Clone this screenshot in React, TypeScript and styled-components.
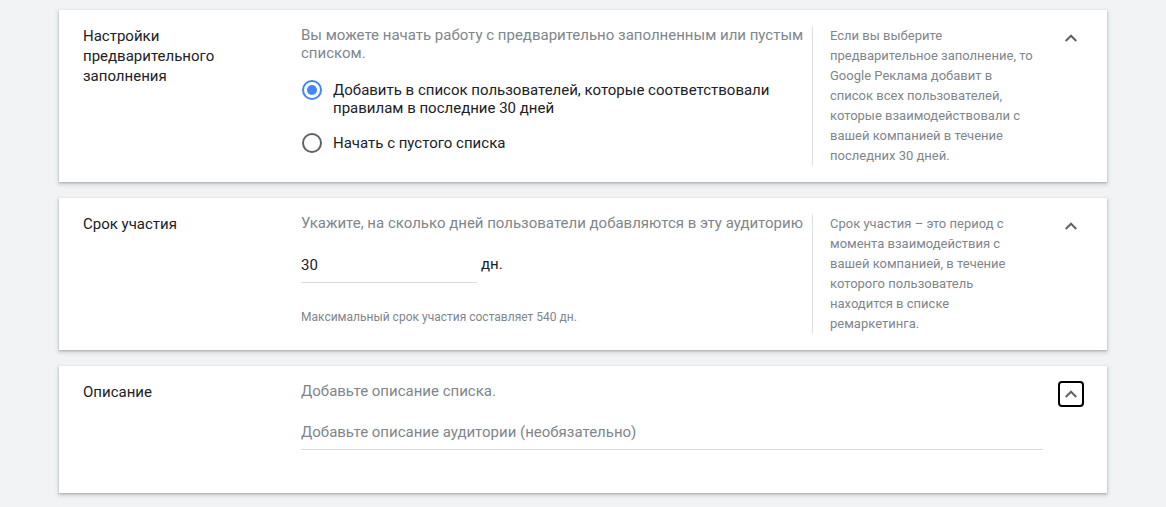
import React from "react";
import styled, { createGlobalStyle } from "styled-components";

const GlobalStyle = createGlobalStyle`
  html, body { margin: 0; padding: 0; background: #f1f3f4; }
  body { font-family: Roboto, "Noto Sans", Arial, sans-serif; -webkit-font-smoothing: antialiased; }
  * { box-sizing: border-box; }
`;

const Page = styled.div`
  display: flex;
  flex-direction: column;
  gap: 16px;
  padding: 10px 59px 14px 59px;
  width: 1166px;
`;

const Card = styled.section<{ $padBottom?: number }>`
  background: #fff;
  box-shadow: 0 1px 2px rgba(60, 64, 67, 0.3), 0 2px 4px 1px rgba(60, 64, 67, 0.15);
  display: grid;
  grid-template-columns: 218px 511px 1px 230px 26px;
  column-gap: 0;
  padding: 16px 23px ${(p) => p.$padBottom ?? 16}px 24px;
  width: 1048px;
  align-items: start;
`;

const Title = styled.div`
  font-size: 15px;
  line-height: 20px;
  color: #202124;
  padding-right: 24px;
`;

const Main = styled.div<{ $wide?: boolean }>`
  grid-column: ${(p) => (p.$wide ? "2 / 5" : "2 / 3")};
  padding-right: ${(p) => (p.$wide ? "0" : "6px")};
  display: flex;
  flex-direction: column;
  align-self: stretch;
`;

const Desc = styled.div`
  font-size: 15px;
  line-height: 18px;
  color: #80868b;
`;

const RadioGroup = styled.div`
  display: flex;
  flex-direction: column;
  gap: 17px;
  margin-top: 19px;
`;

const RadioRow = styled.label`
  display: flex;
  align-items: flex-start;
  gap: 11px;
  cursor: pointer;
`;

const RadioCircle = styled.span<{ $checked?: boolean }>`
  flex: none;
  width: 20px;
  height: 20px;
  margin-top: -1px;
  margin-left: 1px;
  border-radius: 50%;
  border: 2px solid ${(p) => (p.$checked ? "#4285f4" : "#5f6368")};
  display: flex;
  align-items: center;
  justify-content: center;
  &::after {
    content: "";
    width: 10px;
    height: 10px;
    border-radius: 50%;
    background: ${(p) => (p.$checked ? "#4285f4" : "transparent")};
  }
`;

const RadioLabel = styled.span`
  font-size: 15px;
  line-height: 18px;
  color: #202124;
`;

const FieldRow = styled.div<{ $mt: number }>`
  display: flex;
  align-items: center;
  gap: 4px;
  margin-top: ${(p) => p.$mt}px;
`;

const TextInput = styled.input<{ $width?: number }>`
  width: ${(p) => (p.$width ? `${p.$width}px` : "100%")};
  height: 32px;
  border: none;
  border-bottom: 1px solid #dadce0;
  outline: none;
  padding: 0 0 3px 0;
  font-family: Roboto, "Noto Sans", Arial, sans-serif;
  font-size: 15px;
  color: #202124;
  background: transparent;
  &::placeholder { color: #80868b; opacity: 1; }
`;

const Unit = styled.span`
  font-size: 15px;
  color: #202124;
  margin-top: -6px;
`;

const Hint = styled.div`
  font-size: 12px;
  line-height: 16px;
  color: #80868b;
  margin-top: 26px;
`;

const Divider = styled.div`
  width: 1px;
  align-self: stretch;
  background: #e0e0e0;
`;

const Help = styled.div`
  font-size: 13px;
  line-height: 20px;
  color: #80868b;
  padding-left: 17px;
  padding-right: 9px;
`;

const ToggleButton = styled.button<{ $focused?: boolean }>`
  grid-column: 5 / 6;
  width: 26px;
  height: 26px;
  margin-top: -1px;
  margin-left: 15px;
  padding: 0;
  border: 2px solid ${(p) => (p.$focused ? "#000" : "transparent")};
  border-radius: 4px;
  background: transparent;
  display: flex;
  align-items: center;
  justify-content: center;
  cursor: pointer;
  color: #5f6368;
`;

const Chevron = () => (
  <svg width="12" height="8" viewBox="6 7.8 12 7.8" fill="currentColor">
    <path d="M12 8l-6 6 1.41 1.41L12 10.83l4.59 4.58L18 14z" />
  </svg>
);

export default function App() {
  return (
    <>
      <GlobalStyle />
      <Page>
        <Card>
          <Title>Настройки предварительного заполнения</Title>
          <Main>
            <Desc>Вы можете начать работу с предварительно заполненным или пустым списком.</Desc>
            <RadioGroup>
              <RadioRow>
                <RadioCircle $checked />
                <RadioLabel>Добавить в список пользователей, которые соответствовали правилам в последние 30 дней</RadioLabel>
              </RadioRow>
              <RadioRow>
                <RadioCircle />
                <RadioLabel>Начать с пустого списка</RadioLabel>
              </RadioRow>
            </RadioGroup>
          </Main>
          <Divider />
          <Help>
            Если вы выберите предварительное заполнение, то Google Реклама добавит в список всех пользователей, которые взаимодействовали с вашей компанией в течение последних 30 дней.
          </Help>
          <ToggleButton aria-label="Свернуть">
            <Chevron />
          </ToggleButton>
        </Card>

        <Card>
          <Title>Срок участия</Title>
          <Main>
            <Desc>Укажите, на сколько дней пользователи добавляются в эту аудиторию</Desc>
            <FieldRow $mt={19}>
              <TextInput $width={176} defaultValue="30" />
              <Unit>дн.</Unit>
            </FieldRow>
            <Hint>Максимальный срок участия составляет 540 дн.</Hint>
          </Main>
          <Divider />
          <Help>
            Срок участия – это период с момента взаимодействия с вашей компанией, в течение которого пользователь находится в списке ремаркетинга.
          </Help>
          <ToggleButton aria-label="Свернуть">
            <Chevron />
          </ToggleButton>
        </Card>

        <Card $padBottom={43}>
          <Title>Описание</Title>
          <Main $wide>
            <Desc>Добавьте описание списка.</Desc>
            <FieldRow $mt={18}>
              <TextInput placeholder="Добавьте описание аудитории (необязательно)" />
            </FieldRow>
          </Main>
          <ToggleButton $focused aria-label="Свернуть">
            <Chevron />
          </ToggleButton>
        </Card>
      </Page>
    </>
  );
}
